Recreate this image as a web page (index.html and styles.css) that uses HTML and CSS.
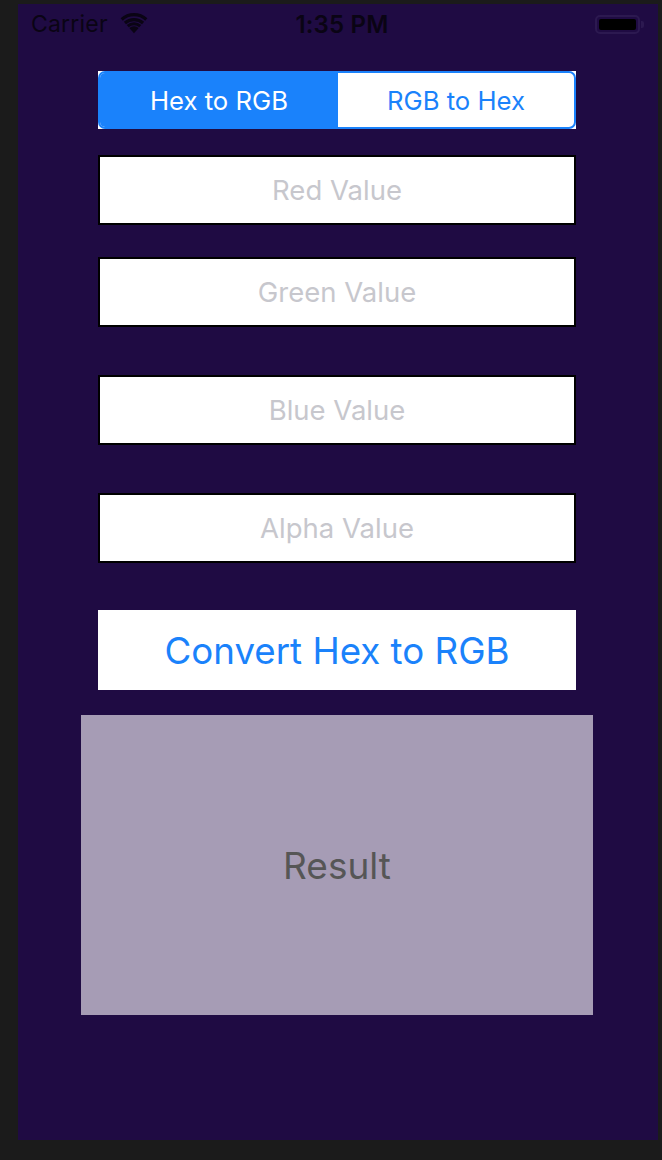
FILE: index.html
```html
<!DOCTYPE html>
<html>
<head>
<meta charset="utf-8">
<link rel="stylesheet" href="styles.css">
</head>
<body>
<div class="screen">
  <div class="status">
    <div class="status-left">
      <span class="carrier">Carrier</span>
      <svg class="wifi" width="30" height="22" viewBox="0 0 28 20">
        <path d="M14 19.5 L9.6 14.6 A6.6 6.6 0 0 1 18.4 14.6 Z" fill="#0a0414"/>
        <path d="M7.2 11.9 A10.2 10.2 0 0 1 20.8 11.9 L18.9 14 A7.4 7.4 0 0 0 9.1 14 Z" fill="#0a0414"/>
        <path d="M4.5 8.9 A14.2 14.2 0 0 1 23.5 8.9 L21.5 11.1 A11.3 11.3 0 0 0 6.5 11.1 Z" fill="#0a0414"/>
        <path d="M1.5 5.6 A18.5 18.5 0 0 1 26.5 5.6 L24.5 7.8 A15.6 15.6 0 0 0 3.5 7.8 Z" fill="#0a0414"/>
      </svg>
    </div>
    <div class="time">1:35 PM</div>
    <div class="battery">
      <div class="battery-body"><div class="battery-fill"></div></div>
      <div class="battery-tip"></div>
    </div>
  </div>

  <div class="content">
    <div class="segment-wrap">
      <div class="segment">
        <div class="seg seg-active">Hex to RGB</div>
        <div class="seg">RGB to Hex</div>
      </div>
    </div>

    <div class="field field-red">Red Value</div>
    <div class="field field-green">Green Value</div>
    <div class="field field-blue">Blue Value</div>
    <div class="field field-alpha">Alpha Value</div>

    <div class="convert">Convert Hex to RGB</div>

    <div class="result">Result</div>
  </div>
</div>
</body>
</html>
```

FILE: styles.css
```css
html, body {
  margin: 0;
  padding: 0;
  background: #1b1b1b;
}
body {
  width: 662px;
  height: 1160px;
  overflow: hidden;
  font-family: Inter, "Noto Sans", "Liberation Sans", sans-serif;
}
.screen {
  margin-left: 18px;
  margin-top: 4px;
  width: 640px;
  height: 1136px;
  background: #1f0b43;
  display: flex;
  flex-direction: column;
}
.status {
  height: 40px;
  display: flex;
  align-items: center;
  justify-content: space-between;
  padding: 0 14px 0 13px;
  color: #0a0414;
  position: relative;
}
.status-left {
  display: flex;
  align-items: center;
  gap: 11px;
}
.carrier {
  font-size: 23px;
  letter-spacing: 0.2px;
}
.wifi {
  margin-top: -3px;
}
.time {
  position: absolute;
  left: 8px;
  right: 0;
  text-align: center;
  font-size: 24px;
  font-weight: 600;
  letter-spacing: 0.2px;
  pointer-events: none;
}
.battery {
  display: flex;
  align-items: center;
}
.battery-body {
  width: 45px;
  height: 19px;
  box-sizing: border-box;
  border: 2px solid #2c1950;
  border-radius: 5px;
  padding: 2px;
}
.battery-fill {
  width: 100%;
  height: 100%;
  background: #000;
  border-radius: 2px;
}
.battery-tip {
  width: 3px;
  height: 7px;
  background: #2c1950;
  border-radius: 0 2px 2px 0;
  margin-left: 1px;
}
.content {
  display: flex;
  flex-direction: column;
  align-items: center;
  padding-right: 2px;
}
.segment-wrap {
  margin-top: 27px;
  width: 478px;
  height: 58px;
  background: #fff;
}
.segment {
  height: 100%;
  box-sizing: border-box;
  border: 2px solid #1a82fb;
  border-radius: 7px;
  display: flex;
  overflow: hidden;
}
.seg {
  flex: 1;
  display: flex;
  align-items: center;
  justify-content: center;
  font-size: 25.7px;
  color: #1a82fb;
}
.seg-active {
  background: #1a82fb;
  color: #fff;
  flex: 0 0 238px;
}
.field {
  width: 478px;
  height: 70px;
  box-sizing: border-box;
  background: #fff;
  border: 2px solid #000;
  display: flex;
  align-items: center;
  justify-content: center;
  font-size: 27.5px;
  color: #c7c7cd;
}
.field-red { margin-top: 26px; }
.field-green { margin-top: 32px; }
.field-blue { margin-top: 48px; }
.field-alpha { margin-top: 48px; }
.convert {
  margin-top: 47px;
  width: 478px;
  height: 80px;
  background: #fff;
  display: flex;
  align-items: center;
  justify-content: center;
  font-size: 36.7px;
  color: #1a82fb;
}
.result {
  margin-top: 25px;
  width: 512px;
  height: 300px;
  background: #a69cb5;
  display: flex;
  align-items: center;
  justify-content: center;
  font-size: 37px;
  color: #565656;
}
```
